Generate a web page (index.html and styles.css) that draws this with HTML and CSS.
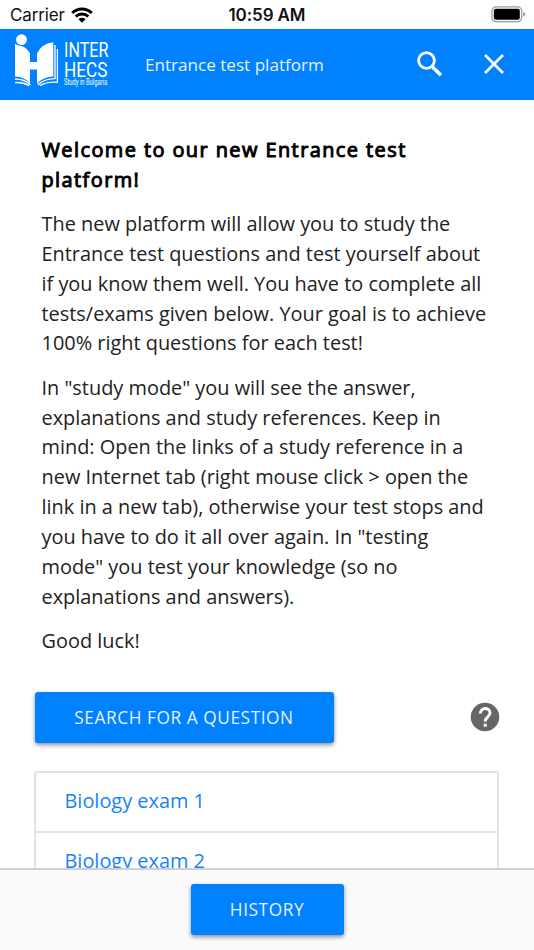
FILE: index.html
```html
<!DOCTYPE html>
<html lang="en">
  <head>
    <meta charset="utf-8">
    <title>Entrance test platform</title>
    <link rel="stylesheet" href="styles.css">
  </head>
  <body>
    <div class="status-bar">
      <div class="carrier">
        <span>Carrier</span>
        <svg class="wifi" viewBox="0 0 22 16" width="22" height="16">
          <path d="M1.2 6.1 A13.8 13.8 0 0 1 20.8 6.1" fill="none" stroke="#000" stroke-width="2.9" />
          <path d="M4.7 9.6 A8.9 8.9 0 0 1 17.3 9.6" fill="none" stroke="#000" stroke-width="2.8" />
          <path d="M11 15.8 L7.5 12.3 A5 5 0 0 1 14.5 12.3 Z" />
        </svg>
      </div>
      <span class="time">10:59 AM</span>
      <svg class="battery" viewBox="0 0 35 17" width="35" height="17">
        <rect x=".9" y=".9" width="29.8" height="14.8" rx="4" fill="none" stroke="#999" stroke-width="1.2" />
        <rect x="2.8" y="2.8" width="26" height="11" rx="2" />
        <path d="M32.2 6 Q34.2 6.5 34.2 8.3 Q34.2 10 32.2 10.6 Z" fill="#999" />
      </svg>
    </div>

    <header class="header">
      <div class="logo">
        <svg class="logo-mark" viewBox="0 0 46 54" width="46" height="54">
          <g fill="#fff">
            <circle cx="7.5" cy="5.6" r="5.4" />
            <path d="M1 9.8 Q4.5 12.2 8.5 12.2 Q13.5 14.5 16 19.5 V28 H23 V19.5 Q28 9.3 39.3 8.3 V42.5 Q29 42.5 23 50 V35.5 H16 V50 Q11 42.5 1 42.5 Z" />
          </g>
          <g fill="none" stroke="#fff" stroke-width="1.3">
            <path d="M1 45 Q11 45 16.5 51" />
            <path d="M1 48.6 Q9 48 15 51.6" />
            <path d="M41 11 V44.7 Q30 44.7 24 51" />
            <path d="M43.4 15 V48.3 Q33 47.4 26 51.6" />
          </g>
        </svg>
        <div class="logo-text">
          <span class="logo-inter">INTER</span>
          <span class="logo-hecs">HECS</span>
          <span class="logo-sub">Study in Bulgaria</span>
        </div>
      </div>
      <span class="title">Entrance test platform</span>
      <svg class="search-icon" viewBox="0 0 26 26" width="26" height="26">
        <circle cx="9.5" cy="9.5" r="7.9" fill="none" stroke="#fff" stroke-width="2.8" />
        <path d="M15.3 15.8 L24 24.3" stroke="#fff" stroke-width="3.6" />
      </svg>
      <svg class="close-icon" viewBox="0 0 20 20" width="20" height="20">
        <path d="M1 1 L19 19 M19 1 L1 19" stroke="#fff" stroke-width="2.7" />
      </svg>
    </header>

    <main class="content">
      <div class="intro">
        <h1>Welcome to our new Entrance test<br>platform!</h1>
        <p>The new platform will allow you to study the<br>Entrance test questions and test yourself about<br>if you know them well. You have to complete all<br>tests/exams given below. Your goal is to achieve<br>100% right questions for each test!</p>
        <p>In "study mode" you will see the answer,<br>explanations and study references. Keep in<br>mind: Open the links of a study reference in a<br>new Internet tab (right mouse click &gt; open the<br>link in a new tab), otherwise your test stops and<br>you have to do it all over again. In "testing<br>mode" you test your knowledge (so no<br>explanations and answers).</p>
        <p>Good luck!</p>
      </div>

      <div class="actions">
        <button class="btn btn-search">SEARCH FOR A QUESTION</button>
        <svg class="help" viewBox="0 0 30 30" width="30" height="30">
          <circle cx="15" cy="15" r="14.3" fill="#666" />
          <path d="M10.4 11.6 C10.4 4.9 20 4.9 20 11 C20 14.8 15.2 15 15.2 19.6" fill="none" stroke="#fff" stroke-width="2.9" />
          <rect x="13.7" y="21.7" width="3" height="3" fill="#fff" />
        </svg>
      </div>

      <div class="exams">
        <a class="exam">Biology exam 1</a>
        <a class="exam">Biology exam 2</a>
      </div>
    </main>

    <footer class="footer">
      <button class="btn btn-history">HISTORY</button>
    </footer>
  </body>
</html>
```
FILE: styles.css
```css
* {
  box-sizing: border-box;
}
body {
  margin: 0;
  height: 950px;
  display: flex;
  flex-direction: column;
  overflow: hidden;
  background: #fff;
  color: #222;
  font-family: "Open Sans", sans-serif;
}

.status-bar {
  height: 29px;
  flex: none;
  display: grid;
  grid-template-columns: 1fr auto 1fr;
  align-items: center;
  padding: 0 10px;
  font-family: Inter, sans-serif;
  font-size: 17px;
  color: #111;
}
.carrier {
  display: flex;
  align-items: center;
  gap: 6px;
  letter-spacing: -0.15px;
}
.time {
  font-weight: 600;
  letter-spacing: -0.1px;
}
.battery {
  justify-self: end;
  margin-right: -2px;
}

.header {
  height: 71px;
  flex: none;
  display: flex;
  align-items: center;
  background: #0081ff;
  color: #fff;
  padding: 0 30px 1px 14px;
}
.logo {
  width: 98px;
  display: flex;
  gap: 4px;
  margin-top: -6px;
}
.logo-mark {
  flex: none;
}
.logo-text {
  display: flex;
  flex-direction: column;
  padding-top: 6px;
  font-family: Roboto, sans-serif;
  white-space: nowrap;
}
.logo-text span {
  transform-origin: 0 0;
}
.logo-inter {
  height: 20px;
  font-size: 21px;
  line-height: 20px;
  transform: scaleX(0.77);
}
.logo-hecs {
  height: 20px;
  font-size: 21px;
  line-height: 20px;
  transform: scaleX(0.82);
}
.logo-sub {
  font-size: 8.5px;
  line-height: 9px;
  margin-top: -2px;
  transform: scaleX(0.68);
}
.title {
  margin-left: 33px;
  font-size: 17.1px;
  color: #e6f2ff;
}
.search-icon {
  margin-left: auto;
}
.close-icon {
  margin-left: 41px;
}

.content {
  flex: 1;
  min-height: 0;
  overflow: hidden;
  padding: 35px 34px 0 34.5px;
}
.intro {
  padding-left: 7px;
  font-size: 19.92px;
  line-height: 29.85px;
  white-space: nowrap;
}
h1 {
  margin: 0;
  font-size: 19.92px;
  font-weight: 400;
  line-height: inherit;
  letter-spacing: 1.44px;
  color: #000;
  -webkit-text-stroke: 1px #000;
}
p {
  margin: 14.4px 0 0;
}

.btn {
  height: 51px;
  border: none;
  border-radius: 3px;
  background: #0081ff;
  color: #e6f2ff;
  font-family: inherit;
  font-size: 17.3px;
  letter-spacing: 0.56px;
  padding: 0;
  box-shadow: 0 2px 4px rgba(0, 0, 0, 0.45);
}
.actions {
  display: flex;
  align-items: center;
  justify-content: space-between;
  margin-top: 36px;
}
.btn-search {
  width: 299px;
}

.exams {
  margin: 28.4px 1px 0 -0.5px;
  border: 2px solid #e2e2e2;
  border-radius: 3px;
}
.exam {
  display: block;
  height: 60px;
  padding-left: 28.5px;
  line-height: 56px;
  font-size: 19.92px;
  color: #1583f7;
  border-bottom: 2px solid #e2e2e2;
}

.footer {
  height: 82px;
  flex: none;
  display: flex;
  justify-content: center;
  align-items: center;
  padding-bottom: 1px;
  background: #fafafa;
  border-top: 2px solid #d0d0d0;
}
.btn-history {
  width: 153px;
}
```
